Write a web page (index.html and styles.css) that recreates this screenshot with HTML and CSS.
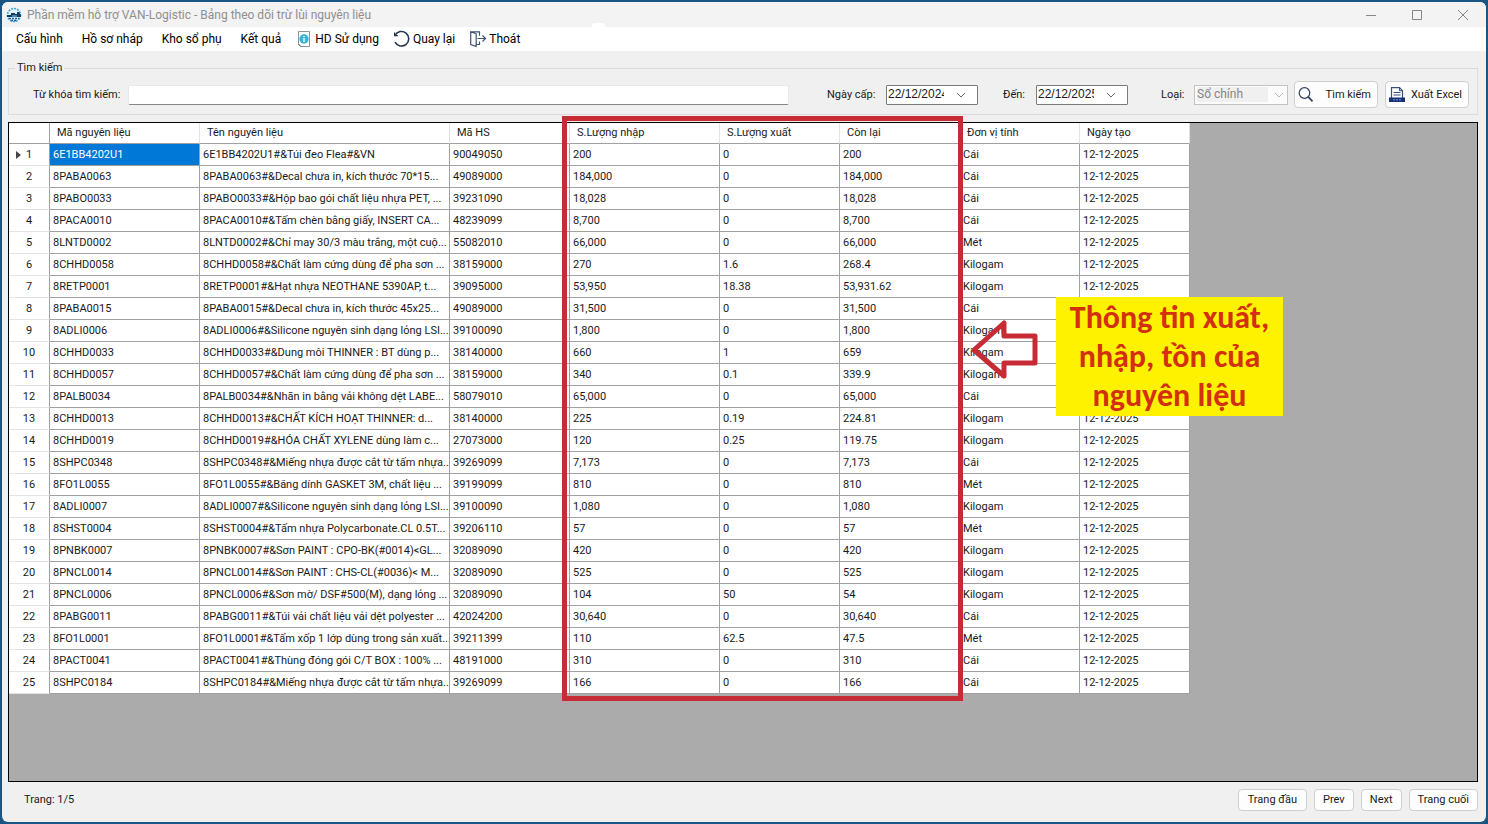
FILE: index.html
```html
<!DOCTYPE html>
<html lang="vi">
<head>
<meta charset="utf-8">
<title>Phần mềm hỗ trợ VAN-Logistic - Bảng theo dõi trừ lùi nguyên liệu</title>
<link rel="stylesheet" href="styles.css">
</head>
<body>
<div class="window">
  <header class="titlebar">
    <svg class="app-icon" viewBox="0 0 16 16" aria-hidden="true">
      <circle cx="8" cy="8" r="6.5" fill="#dff1f8" stroke="#3aa9cf" stroke-width="1.6" stroke-dasharray="2 1"/>
      <path d="M1 8h4V6h4v1h2V5h2l2 3v2H1z" fill="#173a63"/>
      <path d="M3 11.500h10M5 13.500h6" stroke="#1f5c9a" stroke-width="1.400" stroke-dasharray="2 1"/>
      <path d="M6 9h5" stroke="#7fd4ea"/>
    </svg>
    <h1 class="title">Phần mềm hỗ trợ VAN-Logistic - Bảng theo dõi trừ lùi nguyên liệu</h1>
    <div class="caption-buttons">
      <button class="caption" aria-label="Minimize"><svg viewBox="0 0 12 12"><path d="M1 6.500h10"/></svg></button>
      <button class="caption" aria-label="Maximize"><svg viewBox="0 0 12 12"><path d="M1.500 1.500h9v9h-9z"/></svg></button>
      <button class="caption" aria-label="Close"><svg viewBox="0 0 12 12"><path d="M1 1l10 10M11 1L1 11"/></svg></button>
    </div>
  </header>

  <nav class="menubar">
    <button class="menu">Cấu hình</button>
    <button class="menu">Hồ sơ nháp</button>
    <button class="menu">Kho sổ phụ</button>
    <button class="menu">Kết quả</button>
    <button class="menu with-icon">
      <svg viewBox="0 0 16 16" aria-hidden="true"><path d="M2.500.500h11v15h-9l-2-2z" fill="#fff" stroke="#8796a3"/><path d="M2.500 13l2.500 2.500" stroke="#51606e"/><circle cx="8" cy="8" r="4.700" fill="#35b6d8"/><path d="M8 7v4M8 5v1.200" stroke="#fff" stroke-width="1.400"/></svg>HD Sử dụng</button>
    <button class="menu with-icon">
      <svg viewBox="0 0 16 16" aria-hidden="true"><path d="M1 4.300A7.300 7.300 0 1 1 1 11.200" fill="none" stroke="#26354f" stroke-width="1.600"/><path d="M.6 1.500v3.200h3.200" fill="none" stroke="#26354f" stroke-width="1.200"/></svg>Quay lại</button>
    <button class="menu with-icon">
      <svg viewBox="0 0 16 16" aria-hidden="true"><path d="M.7.800l5.500 2v12.700L.7 13.500zM.7.800h8.800v4M6.200 13.500h3.300v-3M7.500 7.500h7.800M12.500 4.500l3 3-3 3" fill="none" stroke="#3d5277" stroke-width="1.200"/></svg>Thoát</button>
  </nav>

  <main class="content">
    <fieldset class="search">
      <legend>Tìm kiếm</legend>
      <div class="search-row">
        <label class="keyword-label" for="keyword">Từ khóa tìm kiếm:</label>
        <input class="keyword" id="keyword" type="text">
        <label class="from-label" for="from">Ngày cấp:</label>
        <span class="date"><input id="from" type="text" value="22/12/2024"><button class="drop" aria-label="Chọn ngày cấp"><svg viewBox="0 0 10 6"><path d="M1 1l4 4 4-4"/></svg></button></span>
        <label class="to-label" for="to">Đến:</label>
        <span class="date"><input id="to" type="text" value="22/12/2025"><button class="drop" aria-label="Chọn ngày đến"><svg viewBox="0 0 10 6"><path d="M1 1l4 4 4-4"/></svg></button></span>
        <label class="type-label" for="type">Loại:</label>
        <span class="combo"><select id="type" disabled><option>Sổ chính</option></select><svg viewBox="0 0 10 6" aria-hidden="true"><path d="M1 1l4 4 4-4"/></svg></span>
        <button class="button tool"><svg viewBox="0 0 16 16" aria-hidden="true"><circle cx="6.500" cy="6" r="5.300" fill="none" stroke="#33415f" stroke-width="1.200"/><path d="M10.300 9.800l4.200 4.500" stroke="#33415f" stroke-width="1.700"/></svg><span>Tìm kiếm</span></button>
        <button class="button tool"><svg viewBox="0 0 16 16" aria-hidden="true"><path d="M2.500 11V.700h8l3 3V11" fill="#fff" stroke="#33517f" stroke-width="1.200"/><path d="M10.500.700v3h3M4.500 5.500h7M4.500 8h7" fill="none" stroke="#33517f"/><path d="M0 10.500h16V15H0z" fill="#17307a"/><path d="M4 12.800h8" stroke="#7f9fe0" stroke-dasharray="2 1"/></svg><span>Xuất Excel</span></button>
      </div>
    </fieldset>

    <section class="grid">
      <table>
        <colgroup><col class="c-index"><col class="c-code"><col class="c-name"><col class="c-hs"><col class="c-in"><col class="c-out"><col class="c-left"><col class="c-unit"><col class="c-date"></colgroup>
        <thead><tr><th></th><th>Mã nguyên liệu</th><th>Tên nguyên liệu</th><th>Mã HS</th><th>S.Lượng nhập</th><th>S.Lượng xuất</th><th>Còn lại</th><th>Đơn vị tính</th><th>Ngày tạo</th></tr></thead>
        <tbody>
          <tr class="current"><th>1</th><td class="selected">6E1BB4202U1</td><td>6E1BB4202U1#&amp;Túi đeo Flea#&amp;VN</td><td>90049050</td><td>200</td><td>0</td><td>200</td><td>Cái</td><td>12-12-2025</td></tr>
          <tr><th>2</th><td>8PABA0063</td><td>8PABA0063#&amp;Decal chưa in, kích thước 70*15...</td><td>49089000</td><td>184,000</td><td>0</td><td>184,000</td><td>Cái</td><td>12-12-2025</td></tr>
          <tr><th>3</th><td>8PABO0033</td><td>8PABO0033#&amp;Hộp bao gói chất liệu nhựa PET, ...</td><td>39231090</td><td>18,028</td><td>0</td><td>18,028</td><td>Cái</td><td>12-12-2025</td></tr>
          <tr><th>4</th><td>8PACA0010</td><td>8PACA0010#&amp;Tấm chèn bằng giấy, INSERT CA...</td><td>48239099</td><td>8,700</td><td>0</td><td>8,700</td><td>Cái</td><td>12-12-2025</td></tr>
          <tr><th>5</th><td>8LNTD0002</td><td>8LNTD0002#&amp;Chỉ may 30/3 màu trắng, một cuộ...</td><td>55082010</td><td>66,000</td><td>0</td><td>66,000</td><td>Mét</td><td>12-12-2025</td></tr>
          <tr><th>6</th><td>8CHHD0058</td><td>8CHHD0058#&amp;Chất làm cứng dùng để pha sơn ...</td><td>38159000</td><td>270</td><td>1.6</td><td>268.4</td><td>Kilogam</td><td>12-12-2025</td></tr>
          <tr><th>7</th><td>8RETP0001</td><td>8RETP0001#&amp;Hạt nhựa NEOTHANE 5390AP, t...</td><td>39095000</td><td>53,950</td><td>18.38</td><td>53,931.62</td><td>Kilogam</td><td>12-12-2025</td></tr>
          <tr><th>8</th><td>8PABA0015</td><td>8PABA0015#&amp;Decal chưa in, kích thước 45x25...</td><td>49089000</td><td>31,500</td><td>0</td><td>31,500</td><td>Cái</td><td>12-12-2025</td></tr>
          <tr><th>9</th><td>8ADLI0006</td><td>8ADLI0006#&amp;Silicone nguyên sinh dạng lỏng LSI...</td><td>39100090</td><td>1,800</td><td>0</td><td>1,800</td><td>Kilogam</td><td>12-12-2025</td></tr>
          <tr><th>10</th><td>8CHHD0033</td><td>8CHHD0033#&amp;Dung môi THINNER : BT dùng p...</td><td>38140000</td><td>660</td><td>1</td><td>659</td><td>Kilogam</td><td>12-12-2025</td></tr>
          <tr><th>11</th><td>8CHHD0057</td><td>8CHHD0057#&amp;Chất làm cứng dùng để pha sơn ...</td><td>38159000</td><td>340</td><td>0.1</td><td>339.9</td><td>Kilogam</td><td>12-12-2025</td></tr>
          <tr><th>12</th><td>8PALB0034</td><td>8PALB0034#&amp;Nhãn in bằng vải không dệt LABE...</td><td>58079010</td><td>65,000</td><td>0</td><td>65,000</td><td>Cái</td><td>12-12-2025</td></tr>
          <tr><th>13</th><td>8CHHD0013</td><td>8CHHD0013#&amp;CHẤT KÍCH HOẠT THINNER: d...</td><td>38140000</td><td>225</td><td>0.19</td><td>224.81</td><td>Kilogam</td><td>12-12-2025</td></tr>
          <tr><th>14</th><td>8CHHD0019</td><td>8CHHD0019#&amp;HÓA CHẤT XYLENE dùng làm c...</td><td>27073000</td><td>120</td><td>0.25</td><td>119.75</td><td>Kilogam</td><td>12-12-2025</td></tr>
          <tr><th>15</th><td>8SHPC0348</td><td>8SHPC0348#&amp;Miếng nhựa được cắt từ tấm nhựa...</td><td>39269099</td><td>7,173</td><td>0</td><td>7,173</td><td>Cái</td><td>12-12-2025</td></tr>
          <tr><th>16</th><td>8FO1L0055</td><td>8FO1L0055#&amp;Băng dính GASKET 3M, chất liệu ...</td><td>39199099</td><td>810</td><td>0</td><td>810</td><td>Mét</td><td>12-12-2025</td></tr>
          <tr><th>17</th><td>8ADLI0007</td><td>8ADLI0007#&amp;Silicone nguyên sinh dạng lỏng LSI...</td><td>39100090</td><td>1,080</td><td>0</td><td>1,080</td><td>Kilogam</td><td>12-12-2025</td></tr>
          <tr><th>18</th><td>8SHST0004</td><td>8SHST0004#&amp;Tấm nhựa Polycarbonate.CL 0.5T...</td><td>39206110</td><td>57</td><td>0</td><td>57</td><td>Mét</td><td>12-12-2025</td></tr>
          <tr><th>19</th><td>8PNBK0007</td><td>8PNBK0007#&amp;Sơn PAINT : CPO-BK(#0014)&lt;GL...</td><td>32089090</td><td>420</td><td>0</td><td>420</td><td>Kilogam</td><td>12-12-2025</td></tr>
          <tr><th>20</th><td>8PNCL0014</td><td>8PNCL0014#&amp;Sơn PAINT : CHS-CL(#0036)&lt; M...</td><td>32089090</td><td>525</td><td>0</td><td>525</td><td>Kilogam</td><td>12-12-2025</td></tr>
          <tr><th>21</th><td>8PNCL0006</td><td>8PNCL0006#&amp;Sơn mờ/ DSF#500(M), dạng lỏng ...</td><td>32089090</td><td>104</td><td>50</td><td>54</td><td>Kilogam</td><td>12-12-2025</td></tr>
          <tr><th>22</th><td>8PABG0011</td><td>8PABG0011#&amp;Túi vải chất liệu vải dệt polyester ...</td><td>42024200</td><td>30,640</td><td>0</td><td>30,640</td><td>Cái</td><td>12-12-2025</td></tr>
          <tr><th>23</th><td>8FO1L0001</td><td>8FO1L0001#&amp;Tấm xốp 1 lớp dùng trong sản xuất...</td><td>39211399</td><td>110</td><td>62.5</td><td>47.5</td><td>Mét</td><td>12-12-2025</td></tr>
          <tr><th>24</th><td>8PACT0041</td><td>8PACT0041#&amp;Thùng đóng gói C/T BOX : 100% ...</td><td>48191000</td><td>310</td><td>0</td><td>310</td><td>Cái</td><td>12-12-2025</td></tr>
          <tr><th>25</th><td>8SHPC0184</td><td>8SHPC0184#&amp;Miếng nhựa được cắt từ tấm nhựa...</td><td>39269099</td><td>166</td><td>0</td><td>166</td><td>Cái</td><td>12-12-2025</td></tr>
        </tbody>
      </table>
      <div class="highlight"></div>
      <svg class="arrow" viewBox="0 0 70 60" aria-hidden="true"><path d="M5 30L35 3v13h31v27H35v13z"/></svg>
      <p class="callout">Thông tin xuất, nhập, tồn của nguyên liệu</p>
    </section>

    <footer class="pager">
      <span class="page">Trang: 1/5</span>
      <button class="button wide">Trang đầu</button>
      <button class="button">Prev</button>
      <button class="button">Next</button>
      <button class="button wide">Trang cuối</button>
    </footer>
  </main>
</div>
</body>
</html>
```
FILE: styles.css
```css
* { box-sizing: border-box; }

body {
  margin: 0;
  padding: 2px;
  min-height: 100vh;
  display: flex;
  background: #1b5583;
  color: #1a1a1a;
  font: 11px/16px Roboto, "Liberation Sans", Arial, sans-serif;
}

button, input, select { font: inherit; color: inherit; margin: 0; }

.window {
  flex: 1;
  display: flex;
  flex-direction: column;
  background: #f0f0f0;
  border-radius: 6px;
  overflow: hidden;
}

.titlebar {
  display: flex;
  align-items: center;
  height: 25px;
  padding-left: 4px;
  background: #f3f3f3;
}
.app-icon { width: 16px; height: 16px; margin-right: 5px; }
.title {
  flex: 1;
  margin: 0;
  font: 12px/16px Roboto, "Noto Sans", sans-serif;
  color: #8f8f8f;
}
.caption-buttons { display: flex; }
.caption {
  display: flex;
  align-items: center;
  justify-content: center;
  width: 46px;
  height: 24px;
  padding: 0;
  border: 0;
  background: none;
}
.caption svg { width: 12px; height: 12px; fill: none; stroke: #868686; }

.menubar {
  position: relative;
  display: flex;
  align-items: center;
  gap: 19px;
  height: 24px;
  padding-left: 14px;
  background: #fff;
}
.menubar::before {
  content: "";
  position: absolute;
  left: 590px;
  top: -4px;
  width: 13px;
  height: 6px;
  border-radius: 3px;
  background: #fff;
}
.menu {
  padding: 0;
  border: 0;
  background: none;
  color: #000;
  font: 12px/16px Roboto, "Noto Sans", sans-serif;
}
.with-icon { display: flex; align-items: center; gap: 3px; margin-left: -4px; }
.with-icon svg { width: 16px; height: 16px; overflow: visible; }

.content {
  flex: 1;
  display: flex;
  flex-direction: column;
  padding: 9px 8px 11px 6px;
}

.search {
  min-width: 0;
  margin: 0 0 7px;
  padding: 5px 8px 6px 24px;
  border: 1px solid #dcdcdc;
}
.search legend { margin-left: -18px; padding: 0 2px; }
.search-row { display: flex; align-items: center; }
.search-row label { flex: none; }
.keyword-label { width: 95px; }
.keyword {
  flex: 1;
  min-width: 0;
  height: 20px;
  padding: 0 4px;
  border: 1px solid #e8e8e8;
  border-bottom-color: #868686;
  border-radius: 2px;
  background: #fff;
}
.from-label { width: 59px; margin-left: 38px; }
.to-label { width: 33px; margin-left: 25px; }
.type-label { width: 33px; margin-left: 33px; }

.date {
  display: flex;
  width: 92px;
  height: 20px;
  border: 1px solid #7a7a7a;
  border-radius: 1px;
  background: #fff;
}
.date input {
  width: 57px;
  padding: 0 0 2px 1px;
  border: 0;
  background: none;
  font: 12px/16px "Liberation Sans", Arial, sans-serif;
}
.drop {
  flex: 1;
  display: flex;
  align-items: center;
  justify-content: center;
  padding: 0;
  border: 0;
  background: none;
}
.drop svg, .combo svg { width: 10px; height: 6px; fill: none; stroke: #666; }

.combo {
  display: flex;
  align-items: center;
  width: 94px;
  height: 20px;
  margin-right: 6px;
  padding: 1px 3px 1px 2px;
  gap: 6px;
  border: 1px solid #c2c2c2;
  background: #fcfcfc;
}
.combo select {
  appearance: none;
  flex: 1;
  min-width: 0;
  height: 15px;
  padding: 0;
  border: 0;
  background: #f0f0f0;
  color: #858585;
  opacity: 1;
  font: 12px/15px Roboto, "Liberation Sans", sans-serif;
}
.combo svg { stroke: #b5b5b5; }

.button {
  min-width: 40px;
  height: 22px;
  padding: 0 8px;
  border: 1px solid #cfcfcf;
  border-radius: 4px;
  background: #fdfdfd;
  white-space: nowrap;
}
.tool {
  display: flex;
  align-items: center;
  justify-content: space-between;
  width: 84px;
  height: 27px;
  padding: 0 6px 0 3px;
}
.tool + .tool { margin-left: 7px; }
.tool svg { width: 16px; height: 16px; }

.grid {
  position: relative;
  flex: 1;
  border: 1px solid #000;
  background: #ababab;
}
table { table-layout: fixed; width: 1181px; border-collapse: separate; border-spacing: 0; }
.c-index { width: 41px; }
.c-code, .c-in { width: 150px; }
.c-name { width: 250px; }
.c-hs, .c-out, .c-left, .c-unit { width: 120px; }
.c-date { width: 110px; }
th, td {
  height: 22px;
  padding: 0 0 0 3px;
  overflow: hidden;
  text-align: left;
  font-weight: normal;
  white-space: nowrap;
  background: #fff;
  border-right: 1px solid #a0a0a0;
  border-bottom: 1px solid #a0a0a0;
}
thead th { height: 21px; padding-left: 7px; border-right-color: #e3e3e3; }
thead th:first-child { border-right-color: #a0a0a0; }
tbody th { padding: 0; text-align: center; border-bottom-color: #e3e3e3; }
.current th::before {
  content: "";
  float: left;
  margin: 4px -12px 0 7px;
  border: 4px solid transparent;
  border-left: 5px solid #444;
  border-right: 0;
}
.selected { background: #0078d7; color: #fff; }

.highlight {
  position: absolute;
  left: 553px;
  top: -7px;
  width: 401px;
  height: 585px;
  border: 5px solid #c72c36;
}
.arrow {
  position: absolute;
  left: 960px;
  top: 197px;
  width: 70px;
  height: 60px;
  fill: none;
  stroke: #c72c36;
  stroke-width: 5;
  stroke-linejoin: round;
}
.callout {
  position: absolute;
  left: 1047px;
  top: 174px;
  width: 227px;
  margin: 0;
  padding: 1px 8px;
  background: #fff200;
  color: #d3300f;
  font: bold 32px/39px Carlito, Lato, sans-serif;
  text-align: center;
}

.pager { display: flex; align-items: center; gap: 7px; margin-top: 7px; }
.page { flex: 1; padding-left: 16px; }
.pager .wide { min-width: 69px; }
```
